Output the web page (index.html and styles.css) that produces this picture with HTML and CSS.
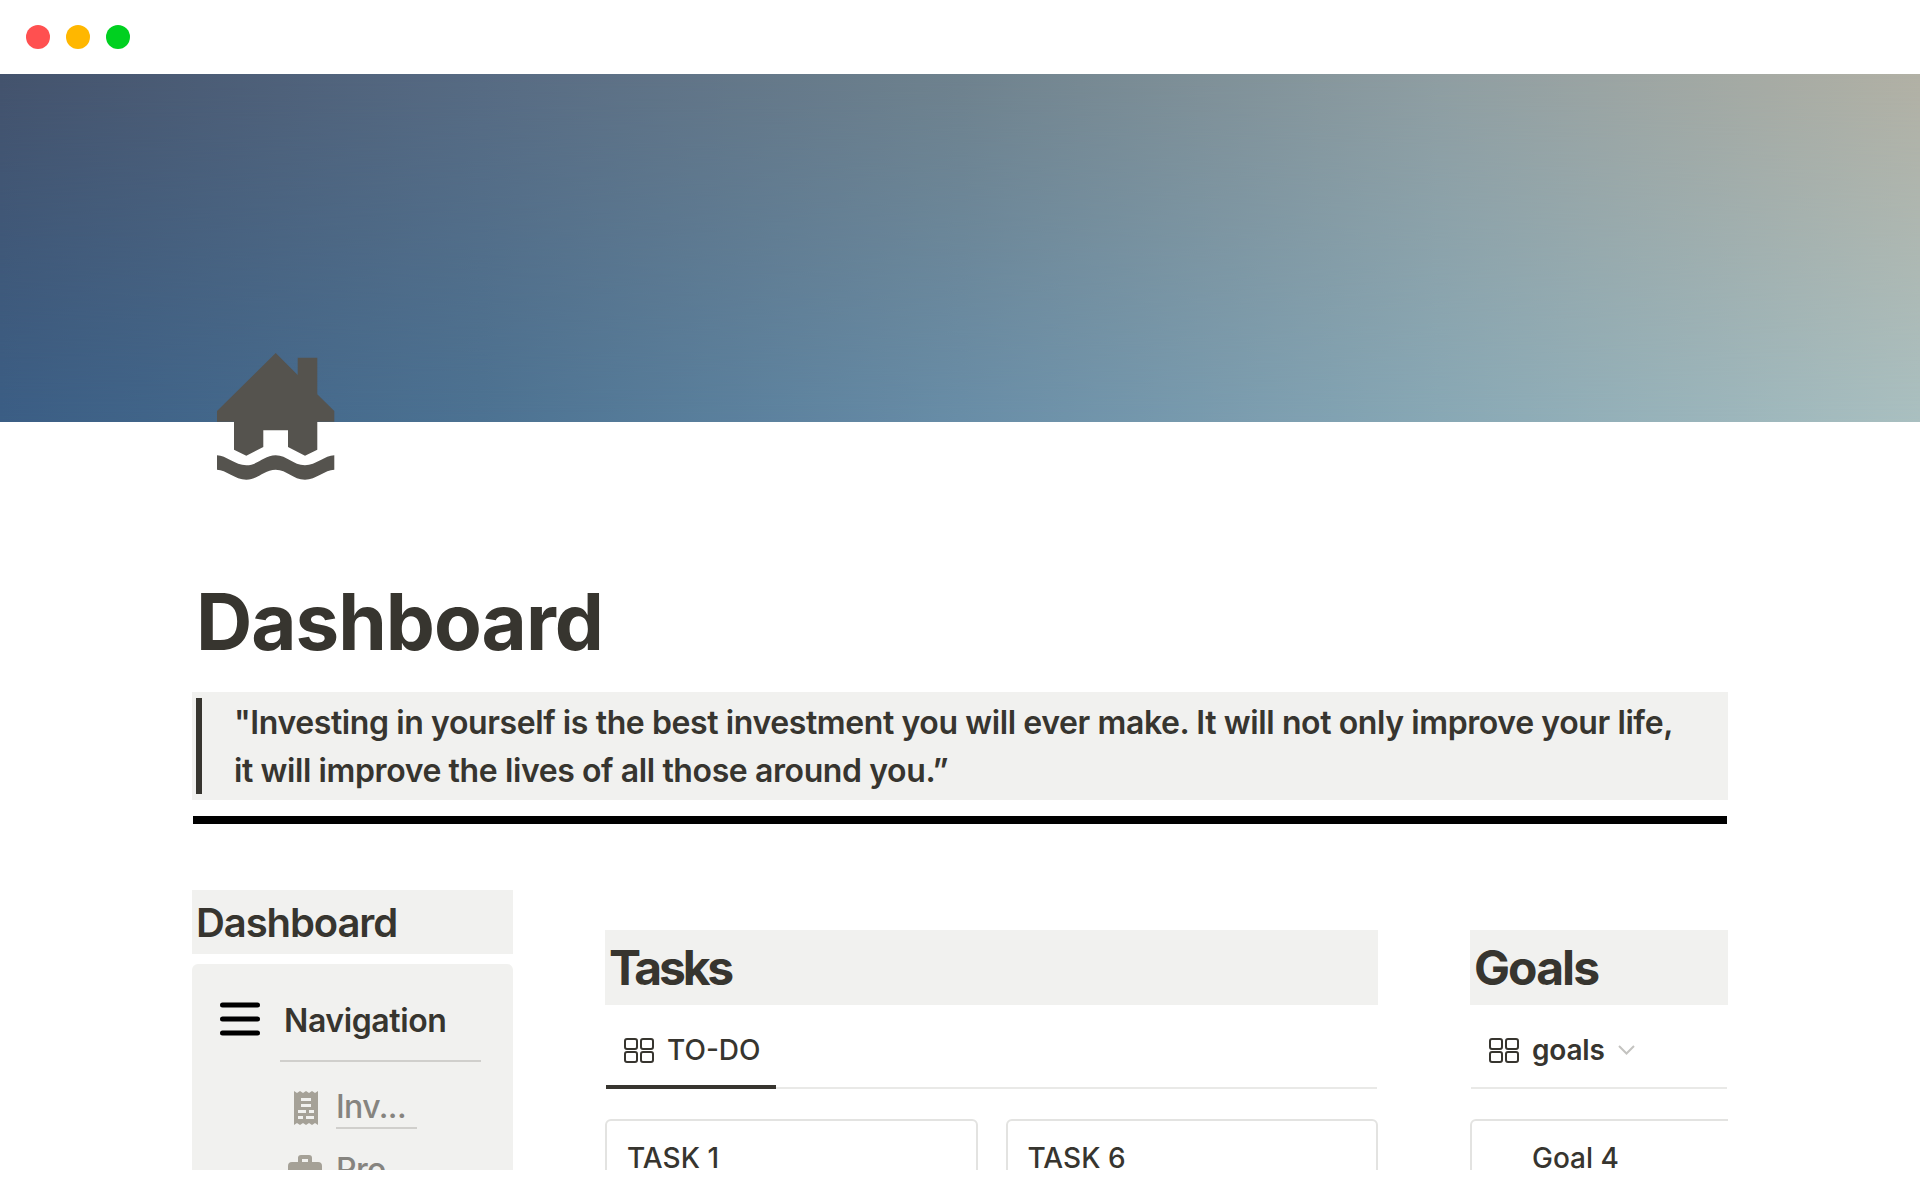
FILE: index.html
```html
<!DOCTYPE html>
<html lang="en">
<head>
  <meta charset="UTF-8" />
  <title>Dashboard</title>
  <link rel="stylesheet" href="styles.css">
</head>
<body>
  <!-- Window bar -->
  <div class="titlebar">
    <span class="dot red"></span>
    <span class="dot yellow"></span>
    <span class="dot green"></span>
  </div>

  <div class="cover"></div>

  <div class="page">
    <svg class="page-icon" viewBox="0 0 118 127" aria-hidden="true">
      <path fill="#55534e" d="M58.7 0 L80.7 22 V4.7 H100.3 V41.3 L117.3 58 V68.7 H100.3 V96.7 L88 102.7 L71 94 V77.3 H46.3 V94 L29.3 102.7 L17 96.7 V68.7 H0 V58 Z"/>
      <path fill="#55534e" d="M0 102.3 C9 102.3 18 112.3 29.3 112.3 C41 112.3 47 102.3 58.7 102.3 C70 102.3 76 112.3 88 112.3 C99 112.3 108 102.3 117.3 102.3 V116.7 C108 116.7 99 126.7 88 126.7 C76 126.7 70 116.7 58.7 116.7 C47 116.7 41 126.7 29.3 126.7 C18 126.7 9 116.7 0 116.7 Z"/>
    </svg>

    <h1 class="title">Dashboard</h1>

    <div class="quote-box">
      <blockquote class="quote">"Investing in yourself is the best investment you will ever make. It will not only improve your life, it will improve the lives of all those around you.”</blockquote>
    </div>
    <div class="rule"></div>

    <div class="columns">
      <!-- Left column -->
      <div class="col-nav">
        <h3 class="nav-heading">Dashboard</h3>
        <div class="nav-card">
          <div class="nav-head">
            <svg class="burger" viewBox="0 0 40 34" aria-hidden="true">
              <path d="M2.5 3 H37.5 M2.5 17 H37.5 M2.5 31 H37.5" stroke="#000" stroke-width="5" stroke-linecap="round"/>
            </svg>
            <div class="nav-title">Navigation</div>
          </div>
          <div class="nav-item">
            <svg class="nav-icon" viewBox="0 0 24 34" aria-hidden="true">
              <path fill="#a5a197" fill-rule="evenodd" d="M0 0 L3 2 L6 0 L9 2 L12 0 L15 2 L18 0 L21 2 L24 0 V34 L21 32 L18 34 L15 32 L12 34 L9 32 L6 34 L3 32 L0 34 Z M7 7 V10 H17 V7 Z M7 13 V16 H17 V13 Z M4 19 V22 H12 V19 Z M15 19 V22 H20 V19 Z M4 25 V28 H9 V25 Z M12 25 V28 H20 V25 Z"/>
            </svg>
            <span class="nav-link">Inv...</span>
          </div>
          <div class="nav-item">
            <svg class="nav-icon wide" viewBox="0 0 34 30" aria-hidden="true">
              <path fill="#a5a197" fill-rule="evenodd" d="M10 7 V3 Q10 0 13 0 H21 Q24 0 24 3 V7 H30 Q34 7 34 11 V26 Q34 30 30 30 H4 Q0 30 0 26 V11 Q0 7 4 7 Z M14 4 V7 H20 V4 Z"/>
            </svg>
            <span class="nav-link plain">Pro</span>
          </div>
        </div>
      </div>

      <!-- Tasks -->
      <div class="col-tasks">
        <h2 class="block-heading tight">Tasks</h2>
        <div class="tabs">
          <div class="tab active">
            <svg class="grid-icon" viewBox="0 0 30 25" aria-hidden="true">
              <g fill="none" stroke="#37352f" stroke-width="2">
                <rect x="1" y="1" width="12" height="10" rx="2"/>
                <rect x="17" y="1" width="12" height="10" rx="2"/>
                <rect x="1" y="14" width="12" height="10" rx="2"/>
                <rect x="17" y="14" width="12" height="10" rx="2"/>
              </g>
            </svg>
            TO-DO
          </div>
        </div>
        <div class="cards">
          <div class="card">TASK 1</div>
          <div class="card">TASK 6</div>
        </div>
      </div>

      <!-- Goals -->
      <div class="col-goals">
        <h2 class="block-heading">Goals</h2>
        <div class="tabs">
          <div class="tab">
            <svg class="grid-icon" viewBox="0 0 30 25" aria-hidden="true">
              <g fill="none" stroke="#37352f" stroke-width="2">
                <rect x="1" y="1" width="12" height="10" rx="2"/>
                <rect x="17" y="1" width="12" height="10" rx="2"/>
                <rect x="1" y="14" width="12" height="10" rx="2"/>
                <rect x="17" y="14" width="12" height="10" rx="2"/>
              </g>
            </svg>
            <span class="tab-bold">goals</span>
            <svg class="chevron" viewBox="0 0 17 10" aria-hidden="true">
              <path d="M1 1 L8.5 8.5 L16 1" fill="none" stroke="#c4c3c0" stroke-width="2"/>
            </svg>
          </div>
        </div>
        <div class="cards">
          <div class="card goal-card">Goal 4</div>
        </div>
      </div>
    </div>
  </div>
</body>
</html>
```

FILE: styles.css
```css
* {
  margin: 0;
  padding: 0;
  box-sizing: border-box;
}
html, body {
  height: 100%;
}
body {
  background: #fff;
  color: #37352f;
  font-family: Inter, "Liberation Sans", sans-serif;
  overflow: hidden;
}

/* Window bar */
.titlebar {
  height: 74px;
  display: flex;
  align-items: center;
  gap: 16px;
  padding-left: 26px;
}
.dot {
  width: 24px;
  height: 24px;
  border-radius: 50%;
}
.red { background: #ff5050; }
.yellow { background: #ffb700; }
.green { background: #00d020; }

/* Cover: top row colours underneath, bottom row colours faded in over them */
.cover {
  position: relative;
  height: 348px;
  background: linear-gradient(90deg, #44536d 0%, #576b83 25%, #6f828e 50%, #8f9ea2 75%, #b2b1a5 100%);
}
.cover::after {
  content: "";
  position: absolute;
  inset: 0;
  background: linear-gradient(90deg, #3b5e85 0%, #4c7292 25%, #688da7 50%, #88a8b5 75%, #a9bfc0 100%);
  -webkit-mask-image: linear-gradient(to bottom, transparent, #000);
  mask-image: linear-gradient(to bottom, transparent, #000);
}

/* Page */
.page {
  padding: 0 192px;
}
.page-icon {
  display: block;
  position: relative;
  width: 118px;
  height: 127px;
  margin: -69px 0 0 25px;
}
.title {
  font-size: 78px;
  font-weight: 700;
  line-height: 94px;
  margin: 95px 0 0 4px;
  letter-spacing: -1px;
}
.quote-box {
  background: #f1f1ef;
  margin-top: 23px;
  padding: 6px 4px;
  height: 108px;
}
.quote {
  border-left: 6px solid #37352f;
  padding: 1px 40px 0 32px;
  font-size: 32px;
  font-weight: 600;
  line-height: 48px;
  letter-spacing: -0.4px;
  height: 96px;
}
.rule {
  height: 8px;
  background: #000;
  margin: 16px 1px 0;
}

/* Columns (the shot ends at 1170, everything below is cut) */
.columns {
  display: flex;
  margin-top: 66px;
  height: 280px;
  overflow: hidden;
}
.col-nav {
  width: 321px;
  flex: none;
}
.col-tasks {
  width: 773px;
  flex: none;
  margin: 40px 0 0 92px;
}
.col-goals {
  flex: 1;
  margin: 40px 0 0 92px;
  min-width: 0;
  overflow: hidden;
}
.nav-heading {
  background: #f1f1ef;
  height: 64px;
  line-height: 66px;
  padding-left: 4px;
  font-size: 40px;
  font-weight: 600;
  letter-spacing: -1.1px;
}
.nav-card {
  background: #f1f1ef;
  border-radius: 6px;
  margin-top: 10px;
  padding: 38px 32px 20px 28px;
  height: 300px;
}
.nav-head {
  display: flex;
  align-items: flex-start;
  gap: 24px;
}
.burger {
  width: 40px;
  height: 34px;
  flex: none;
}
.nav-title {
  flex: 1;
  font-size: 32px;
  font-weight: 600;
  letter-spacing: -0.4px;
  padding: 1px 0 21px 4px;
  border-bottom: 2px solid #d0cfcc;
  margin-left: -4px;
  line-height: 36px;
}
.nav-item {
  display: flex;
  align-items: center;
  gap: 18px;
  margin: 22px 0 -8px 68px;
  height: 48px;
}
.nav-icon {
  width: 24px;
  height: 34px;
  flex: none;
  margin-left: 6px;
}
.nav-icon.wide {
  width: 34px;
  height: 30px;
  margin-left: 0;
  margin-right: -4px;
}
.nav-link {
  font-size: 32px;
  color: #86847f;
  width: 81px;
  border-bottom: 2px solid #d0cfcc;
  font-weight: 500;
  letter-spacing: -0.6px;
  line-height: 40px;
}
.nav-link.plain {
  border-bottom: 0;
}

/* Database blocks */
.block-heading {
  background: #f1f1ef;
  height: 75px;
  line-height: 76px;
  padding-left: 4px;
  font-size: 48px;
  font-weight: 700;
  letter-spacing: -1.9px;
}
.block-heading.tight {
  letter-spacing: -3.2px;
}
.tabs {
  height: 84px;
  border-bottom: 2px solid #e9e9e7;
  margin: 0 1px;
  display: flex;
}
.tab {
  display: flex;
  align-items: center;
  gap: 13px;
  height: 84px;
  padding: 10px 16px 0 18px;
  border-bottom: 4px solid transparent;
  font-size: 28px;
  font-weight: 500;
}
.tab.active {
  border-bottom-color: #37352f;
  padding-right: 15px;
}
.tab-bold {
  font-weight: 600;
  letter-spacing: -0.2px;
}
.grid-icon {
  width: 30px;
  height: 25px;
  flex: none;
}
.chevron {
  width: 17px;
  height: 10px;
}
.cards {
  display: flex;
  gap: 28px;
  margin-top: 30px;
}
.card {
  flex: 1;
  height: 120px;
  border: 2px solid #e3e3e1;
  border-radius: 6px;
  padding: 19px 20px;
  font-size: 28px;
  font-weight: 500;
  line-height: 36px;
}
.goal-card {
  padding-left: 60px;
  margin-right: -20px;
}
```
